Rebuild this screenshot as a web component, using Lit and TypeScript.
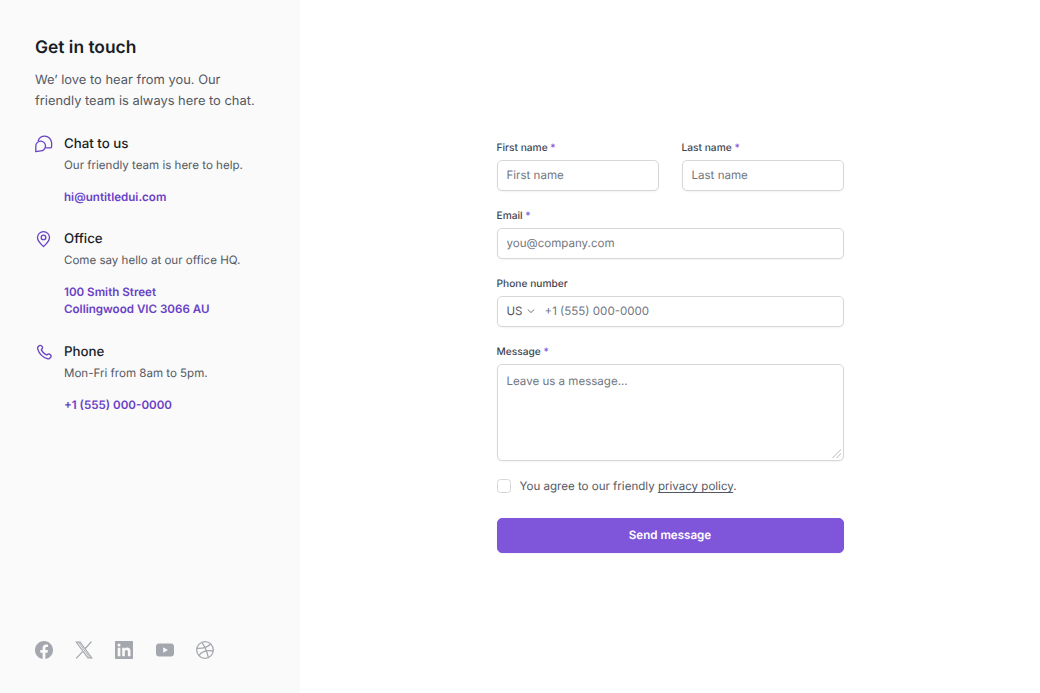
import { LitElement, html, css } from "lit";
import { customElement } from "lit/decorators.js";

@customElement("app-root")
export class AppRoot extends LitElement {
  static styles = css`
    :host { display: flex; height: 693px; font-family: Inter, "Liberation Sans", sans-serif; background: #fff; color: #181d27; overflow: hidden; text-rendering: geometricPrecision; }
    * { box-sizing: border-box; }
    input, textarea, button { text-rendering: geometricPrecision; }
    .side { width: 300px; flex: none; background: #fafafa; padding: 35.7px 35px 34px; display: flex; flex-direction: column; justify-content: space-between; }
    h1 { margin: 0; font-size: 17.4px; line-height: 23px; font-weight: 600; color: #181d27; }
    .lead { margin: 12.5px 0 0; font-size: 12.9px; line-height: 20.5px; color: #535862; }
    .items { display: flex; flex-direction: column; gap: 23.75px; margin-top: 22.5px; }
    .item { display: flex; gap: 11px; }
    .ic { width: 18px; height: 18px; flex: none; color: #6941c6; }
    .ic svg { display: block; }
    h2 { margin: 0; font-size: 13.3px; line-height: 18px; font-weight: 500; color: #181d27; }
    .desc { margin: 3px 0 0; font-size: 11.55px; line-height: 18px; color: #535862; }
    .link { display: block; margin-top: 15px; font-size: 11.6px; line-height: 17.5px; font-weight: 600; color: #6941c6; text-decoration: none; }
    .social { display: flex; gap: 22.2px; color: #a4a7ae; }
    .social svg { display: block; }
    .main { flex: 1; display: flex; align-items: center; justify-content: center; }
    form { width: 347px; display: flex; flex-direction: column; padding-top: 1.5px; }
    .row { display: flex; gap: 23px; }
    .field { flex: 1 0 auto; display: flex; flex-direction: column; gap: 4.5px; min-width: 0; margin-bottom: 19px; }
    .row .field { flex: 1 1 0; }
    .field.msg { margin-bottom: 16.5px; }
    label { font-size: 10.2px; line-height: 13px; font-weight: 500; color: #414651; }
    label b { font-weight: 500; color: #7f56d9; }
    .control { width: 100%; height: 31.5px; border: 1px solid #d5d7da; border-radius: 5px; background: #fff; box-shadow: 0 1px 2px rgba(10,13,18,.05); font: inherit; font-size: 11.55px; color: #181d27; padding: 0 9px; outline: none; }
    input::placeholder, textarea::placeholder { color: #717680; opacity: 1; }
    textarea.control { display: block; height: 97px; padding: 8px 9px; line-height: 17px; resize: vertical; }
    textarea::-webkit-resizer { background: linear-gradient(135deg, transparent 46%, #d9dadc 46%, #d9dadc 56%, transparent 56%, transparent 70%, #d9dadc 70%, #d9dadc 80%, transparent 80%) right 2px bottom 2px / 9px 9px no-repeat; }
    .phone { display: flex; align-items: center; padding: 0 9px; }
    .phone span { font-size: 11.55px; color: #535862; }
    .phone svg { margin: 0 9px 0 3px; flex: none; color: #717680; }
    .phone input { flex: 1; min-width: 0; border: 0; outline: 0; padding: 0; font: inherit; font-size: 11.55px; background: transparent; }
    .agree { display: flex; align-items: center; gap: 9px; font-size: 11.55px; line-height: 18px; color: #535862; margin: 0 0 23px; }
    .agree input { appearance: none; width: 14px; height: 14px; margin: 0; border: 1px solid #d5d7da; border-radius: 3.5px; background: #fff; }
    .agree a { color: #535862; text-decoration: underline; text-underline-offset: 2px; }
    button { height: 34.5px; border: 1px solid #7f56d9; border-radius: 5px; background: #7f56d9; color: #fff; font: inherit; font-size: 11.6px; font-weight: 600; box-shadow: 0 1px 2px rgba(10,13,18,.05); }
  `;

  private item(icon: unknown, title: string, desc: string, links: string[]) {
    return html`<div class="item">
      <div class="ic">${icon}</div>
      <div>
        <h2>${title}</h2>
        <p class="desc">${desc}</p>
        <a class="link" href="#">${links.map((l, i) => html`${i ? html`<br />` : ""}${l}`)}</a>
      </div>
    </div>`;
  }

  render() {
    const chat = html`<svg width="18" height="18" viewBox="0 0 18 18" fill="none" stroke="currentColor" stroke-width="1.3" stroke-linecap="round" stroke-linejoin="round"><path d="M3.200 5.800C4.200 3 6.800 1.200 9.700 1.200c3.800 0 6.900 3 6.900 6.800v3.800c0 .6-.4 1-1 1h-4.500"/><path d="M.8 16.700V11a4.850 4.850 0 1 1 4.850 4.900z"/></svg>`;
    const pin = html`<svg width="18" height="18" viewBox="0 0 18 18" fill="none" stroke="currentColor" stroke-width="1.3" stroke-linecap="round" stroke-linejoin="round"><path d="M8.500 16.600c3.800-3.300 6-5.900 6-9A6 6 0 0 0 2.500 7.600c0 3.100 2.200 5.700 6 9z"/><circle cx="8.500" cy="7.400" r="2.300"/></svg>`;
    const phone = html`<svg width="18" height="18" viewBox="0 0 24 24" fill="none" stroke="currentColor" stroke-width="1.800" stroke-linecap="round" stroke-linejoin="round"><path d="M8.380 8.853a14.603 14.603 0 0 0 2.847 4.010 14.603 14.603 0 0 0 4.010 2.847c.124.060.187.090.265.112.280.082.623.023.860-.147.066-.048.123-.105.236-.218.345-.346.518-.518.692-.630a2 2 0 0 1 2.180 0c.173.112.346.284.690.630l.193.193c.526.525.788.788.931 1.070a2 2 0 0 1 0 1.806c-.143.282-.405.545-.930 1.070l-.157.156c-.523.523-.785.785-1.140.985-.394.222-1.006.382-1.458.380-.410 0-.680-.081-1.220-.235a18.410 18.410 0 0 1-7.984-4.690 18.410 18.410 0 0 1-4.690-7.984c-.154-.540-.235-.810-.235-1.220-.002-.452.158-1.064.380-1.457.200-.356.462-.618.985-1.140l.156-.157c.526-.526.788-.788 1.070-.930a2 2 0 0 1 1.806 0c.282.142.545.404 1.070.930l.193.193c.346.345.518.518.630.692a2 2 0 0 1 0 2.180c-.112.173-.284.346-.630.690-.112.113-.169.170-.217.236-.170.237-.229.580-.147.860.022.078.052.140.112.265z"/></svg>`;
    return html`
      <aside class="side">
        <div>
          <h1>Get in touch</h1>
          <p class="lead">We’ love to hear from you. Our friendly team is always here to chat.</p>
          <div class="items">
            ${this.item(chat, "Chat to us", "Our friendly team is here to help.", ["hi@untitledui.com"])}
            ${this.item(pin, "Office", "Come say hello at our office HQ.", ["100 Smith Street", "Collingwood VIC 3066 AU"])}
            ${this.item(phone, "Phone", "Mon-Fri from 8am to 5pm.", ["+1 (555) 000-0000"])}
          </div>
        </div>
        <div class="social">
          <svg width="18" height="18" viewBox="0 0 18 18"><path fill="currentColor" d="M18 9.050C18 4.050 13.970 0 9 0S0 4.050 0 9.050c0 4.520 3.290 8.260 7.590 8.950v-6.330H5.310V9.050h2.280V7.060c0-2.270 1.340-3.520 3.400-3.520.99 0 2.020.18 2.020.18v2.230h-1.130c-1.120 0-1.470.7-1.470 1.410v1.700h2.490l-.4 2.620h-2.090V18C14.710 17.310 18 13.570 18 9.050z"/></svg>
          <svg width="18" height="18" viewBox="0 0 18 18" fill="none" stroke="currentColor" stroke-width="1.100"><path d="M1.200 1.100h3.900l11.700 15.800h-3.900z"/><path d="M3.300 1.100l11.700 15.800" stroke-width=".9"/><path d="M16.400 .6 10.300 7.500M7.600 10.600 1.200 17.400" stroke-width="1.300"/></svg>
          <svg width="18" height="18" viewBox="0 0 18 18"><path fill="currentColor" fill-rule="evenodd" d="M1 0h16c.6 0 1 .4 1 1v16c0 .6-.4 1-1 1H1c-.6 0-1-.4-1-1V1c0-.6.4-1 1-1zM2.700 6.800v8.500h2.700V6.800zM4 2.500a1.550 1.550 0 1 0 0 3.100 1.550 1.550 0 0 0 0-3.100zM7.200 6.800v8.500h2.650v-4.400c0-1.150.5-2 1.600-2 1.100 0 1.400.9 1.400 2.050v4.350h2.650v-5c0-2.400-1.300-3.700-3.200-3.700-1.200 0-2 .6-2.450 1.300V6.800z"/></svg>
          <svg width="18" height="18" viewBox="0 0 18 18"><path fill="currentColor" fill-rule="evenodd" d="M3 2.600h12c1.600 0 3 1.300 3 3v6.800c0 1.700-1.400 3-3 3H3c-1.600 0-3-1.300-3-3V5.600c0-1.700 1.400-3 3-3zM7.200 6.300v5.400L11.900 9z"/></svg>
          <svg width="18" height="18" viewBox="0 0 18 18" fill="none" stroke="currentColor" stroke-width="1.300"><circle cx="9" cy="9" r="8.300"/><path d="M5.700 1.400c2.700 3.300 4.800 7 6.600 15"/><path d="M.9 7.300c5 .3 10-.6 13.800-4.300"/><path d="M2.900 14.600C5.200 11 10.500 8.500 17.200 10"/></svg>
        </div>
      </aside>
      <main class="main">
        <form>
          <div class="row">
            <div class="field"><label>First name <b>*</b></label><input class="control" placeholder="First name" /></div>
            <div class="field"><label>Last name <b>*</b></label><input class="control" placeholder="Last name" /></div>
          </div>
          <div class="field"><label>Email <b>*</b></label><input class="control" placeholder="you@company.com" /></div>
          <div class="field"><label>Phone number</label>
            <div class="control phone"><span>US</span><svg width="10" height="10" viewBox="0 0 10 10" fill="none" stroke="currentColor" stroke-width="1" stroke-linecap="round" stroke-linejoin="round"><path d="M2 3.800 5 6.500 8 3.800"/></svg><input placeholder="+1 (555) 000-0000" /></div>
          </div>
          <div class="field msg"><label>Message <b>*</b></label><textarea class="control" placeholder="Leave us a message..."></textarea></div>
          <div class="agree"><input type="checkbox" /><span>You agree to our friendly <a href="#">privacy policy</a>.</span></div>
          <button type="button">Send message</button>
        </form>
      </main>
    `;
  }
}
